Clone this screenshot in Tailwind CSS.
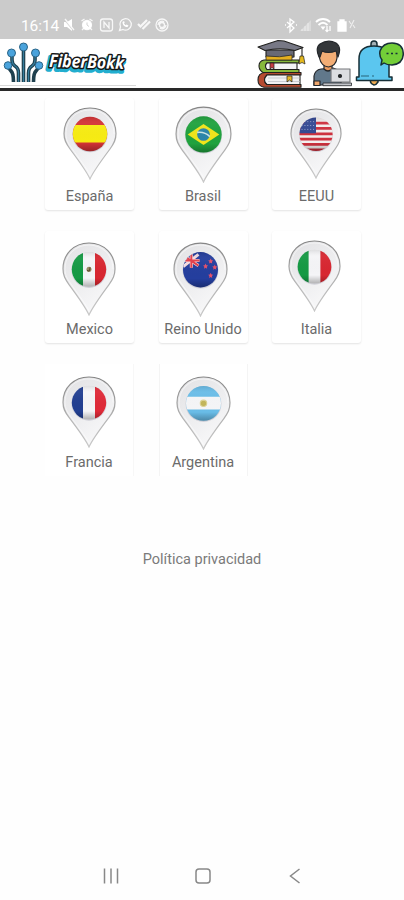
<!DOCTYPE html>
<html lang="es">
<head>
<meta charset="utf-8">
<title>FiberBokk</title>
<script src="https://cdn.jsdelivr.net/npm/@tailwindcss/browser@4"></script>
</head>
<body class="w-[404px] h-[900px] overflow-hidden bg-[#fefefe] font-[Roboto,sans-serif] text-[#6b6b6b] flex flex-col">
<svg class="absolute w-0 h-0">
  <defs>
    <linearGradient id="shell" x1="0" y1="0" x2=".6" y2="1"><stop offset="0" stop-color="#e2e2e4"/><stop offset=".45" stop-color="#ebebed"/><stop offset="1" stop-color="#f8f8f9"/></linearGradient>
    <linearGradient id="rim" x1="0" y1="0" x2="0" y2="1"><stop offset="0" stop-color="#858585"/><stop offset=".6" stop-color="#b4b4b4"/><stop offset="1" stop-color="#c8c8c8"/></linearGradient>
    <linearGradient id="shade" x1="0" y1="0" x2="0" y2="1"><stop offset="0" stop-color="#000" stop-opacity=".1"/><stop offset=".2" stop-color="#fff" stop-opacity=".04"/><stop offset=".75" stop-color="#000" stop-opacity="0"/><stop offset="1" stop-color="#000" stop-opacity=".28"/></linearGradient>
    <clipPath id="disc"><circle cx="27" cy="27" r="17.2"/></clipPath>
    <symbol id="pin" viewBox="0 0 54 73" preserveAspectRatio="none">
      <path d="M27 72 C23.500 64 16 54 7 42 C3 36.500 1 33 1 26.500 C1 12 12 1 27 1 C42 1 53 12 53 26.500 C53 33 51 36.500 47 42 C38 54 30.500 64 27 72Z" fill="url(#shell)" stroke="url(#rim)" stroke-width="1.200"/>
      <path d="M27 68 C23 60 17 53 9 41.500 C5 36 3 33 3 27 C3 13 13 3 27 3 C41 3 51 13 51 27" fill="none" stroke="#fff" stroke-opacity=".5"/>
      <circle cx="27" cy="27.700" r="17.600" fill="#d0d0d8"/>
    </symbol>
    <symbol id="gloss" viewBox="0 0 54 73" preserveAspectRatio="none"><circle cx="27" cy="27" r="17.200" fill="url(#shade)"/></symbol>
  </defs>
</svg>

<div class="h-[39px] shrink-0 bg-[#cbcbcb] text-white flex items-end justify-between pl-[21px] pr-[46px] pb-[4px]">
  <div class="flex items-center h-[20px]">
    <span class="text-[15.5px] leading-[20px] w-[41px] tracking-[-0.1px] pt-px">16:14</span>
    <svg width="110" height="18" viewBox="0 0 110 18" fill="none" stroke="#fff" stroke-opacity=".85" stroke-width="1.300">
      <path d="M2 6h3l5-3v12l-5-4H2z" fill="#fff" stroke="none"/><path d="M2 3l10 12" stroke="#cbcbcb"/><path d="M3 3l9 11"/>
      <circle cx="25" cy="9" r="4.500" fill="#fff"/><path d="M19.500 5l3-2M30.500 5l-3-2M20 14l2-2M30 14l-2-2"/><path d="M25 6.500V9l2 1.500" stroke="#cbcbcb" stroke-width="1"/>
      <rect x="38.500" y="3" width="12" height="12" rx="2.500"/><path d="M42 12V6l5 6V6"/>
      <path d="M57.500 14.500l1-3.500a5.700 5.700 0 1 1 2.500 2.500z"/><path d="M60.500 6c0 3 2 5 5 5l1-1.500-2-1-1 .7-1.500-1.700.7-1-.7-1.500z" fill="#fff" stroke="none"/>
      <path d="M76 8l2.500 2.500L85 4M80.500 13L88 5.500" stroke-width="2.200"/>
      <circle cx="100" cy="9" r="6"/><circle cx="100" cy="9" r="2.500"/><path d="M96 9c0-3 4-5 6-3M104 9c0 3-4 5-6 3"/>
    </svg>
  </div>
  <svg width="74" height="20" viewBox="0 0 74 20" fill="none" stroke="#fff" stroke-width="1.300">
    <path d="M3 7l7 6-4 4V4l4 3-7 6M1 10h1M12 10h1"/>
    <path d="M16 16L27 5v11z" fill="#fff" fill-opacity=".3" stroke="none"/><path d="M18 16v-2M21 16v-5M24 16V8" stroke-opacity=".4"/>
    <path d="M32 7c4-4 10-4 14 0M34.500 10c3-3 6-3 9 0" stroke-width="1.800"/><path d="M36.500 11.500h5L39 15z" fill="#fff" stroke="none"/><path d="M43 11v5M46 16v-5M41.500 15l1.500 1.500 1.500-1.500"/>
    <path d="M54 7h2V5h4v2h2v9h-8z" fill="#fff"/><path d="M65 6l2 3M70 5l-4 8M69 10l2 3" stroke-width="1.100" stroke-opacity=".7"/>
  </svg>
</div>

<header class="h-[52px] shrink-0 bg-white border-b-[3px] border-[#292929]">
  <svg width="404" height="49" viewBox="0 39 404 49">
    <path d="M0 85.500H136" stroke="#d8d8d8"/>
    <g fill="none" stroke="#1f404e" stroke-width="3.600">
      <path d="M23.500 50V82M12 55V60Q12 64 15 66Q18.500 68 18.500 73V82M35 55V60Q35 64 32 66Q28.500 68 28.500 73V82M8 67L11 71Q13.500 73 13.500 82M39 67L36 71Q33.500 73 33.500 82"/>
    </g>
    <g fill="none" stroke="#367c9b" stroke-width="1.200"><path d="M23.500 50V82M12 55V60Q12 64 15 66Q18.500 68 18.500 73V82M35 55V60Q35 64 32 66Q28.500 68 28.500 73V82"/></g>
    <g fill="#4aa3dc" stroke="#2b6587" stroke-width="1"><circle cx="23.500" cy="47" r="4"/><circle cx="11.500" cy="53" r="4"/><circle cx="35.500" cy="53" r="4"/><circle cx="8" cy="65.500" r="3.800"/><circle cx="39" cy="65.500" r="3.800"/></g>
    <g font-family="'Open Sans', sans-serif" font-weight="700" font-style="italic" font-size="17.500" paint-order="stroke" stroke-linejoin="round" transform="rotate(1.500 48 68)">
      <text x="47" y="69.500" textLength="76" lengthAdjust="spacingAndGlyphs" fill="#22aecf" stroke="#22aecf" stroke-width="4.500">FiberBokk</text>
      <text x="49" y="67" textLength="75" lengthAdjust="spacingAndGlyphs" fill="#fff" stroke="#161616" stroke-width="3">FiberBokk</text>
    </g>
    <!-- books -->
    <g stroke="#20201e" stroke-width="1.100" stroke-linejoin="round">
      <path d="M265 72.500H301V75H267Q262 80 267 84.500H301V87.300H264Q258 86 258 80Q258 73 265 72.500Z" fill="#b54a30"/>
      <path d="M267 75H300V84.500H267Q262 80 267 75Z" fill="#f1f1f3"/>
      <path d="M268 78H300M268 81.500H300" stroke="#b8bbc2" stroke-width=".7"/>
      <path d="M287 76H292V82L289.500 80L287 82Z" fill="#e6b72a" stroke-width=".7"/>
      <path d="M264 60H299V63H267Q264 66 267 69.500H299V72.500H263Q259 70 259 66Q259 61 264 60Z" fill="#86b83b"/>
      <path d="M267 63H297V69.500H267Q264 66 267 63Z" fill="#f3f3f5"/>
      <path d="M270 63H274V69L272 67.500L270 69Z" fill="#c73b43" stroke-width=".7"/>
      <path d="M266 50H294V57Q280 59 266 57Z" fill="#686975"/>
      <path d="M266 56Q280 58 292 55V60H266Z" fill="#e5af1f" stroke-width=".7"/>
      <path d="M258 47L278 40.500L284 41L303 47.500L295 50.500Q280 47 265 50.500Z" fill="#777885"/>
      <path d="M302 48V57" fill="none"/><path d="M300 56H303.500L305 64Q302 61 299 64Z" fill="#e5b91d" stroke-width=".7"/>
    </g>
    <!-- person with laptop -->
    <g stroke="#24272b" stroke-width="1.200" stroke-linejoin="round">
      <path d="M314 85V76Q315 70 321 69L333 68Q340 70 341 76V85Z" fill="#61788b"/>
      <path d="M314 81H320V85.500H314Z" fill="#eea66d"/>
      <path d="M324 64H332V69Q328 73 324 69Z" fill="#e99b61"/>
      <path d="M319.500 51Q328 47 337 51V58Q336 66 328.500 67Q321 66 319.500 58Z" fill="#f2ad75"/>
      <path d="M319 57Q315 48 320 44Q328 39 336 43Q342 47 338 57L336 51Q328 54 322 51L320 57Z" fill="#34373a"/>
      <path d="M331 69H350V82H331Z" fill="#dcdde1" stroke="#77797d"/><path d="M323 83H351.500V85.700H323Z" fill="#c4c5ca" stroke-width=".8"/>
      <circle cx="340" cy="76" r="1.500" fill="#292929"/>
    </g>
    <!-- notification bell -->
    <g stroke="#172f37" stroke-width="1.500" stroke-linejoin="round">
      <path d="M371 47V44Q371 41 374 41Q377 41 377 44V47" fill="#a5b1b6"/>
      <path d="M370.500 79H378V82Q376 85 374 85Q371 84 370.500 82Z" fill="#efaa51"/>
      <path d="M359 77V59Q359 46 374 46Q389 46 389 59V77H392V80.500H356.500V77Z" fill="#5bc6ef"/>
      <path d="M361 76H369M372 76H374" stroke="#28647a" stroke-width="1.100"/>
      <path d="M384 63L381 65L382 60Q379 56 380 51Q383 43 392 43Q403 43 403.300 54Q403 64 392 65Q387 65 384 63Z" fill="#73ce38"/>
      <path d="M386.500 53.500H388.500M391 53.500H393M395.500 53.500H397.500" stroke-width="1.700"/>
    </g>
  </svg>
</header>

<main class="ml-[45px] mt-[7px] grid grid-cols-[repeat(3,89px)] gap-x-[24.5px] gap-y-[21px] text-[14.5px] leading-[18px]">
  <div class="h-[112px] rounded-[3px] bg-white shadow-[0_1px_2px_#0000001c] flex flex-col justify-between pb-[4px]">
    <svg class="ml-[17.500px] mt-[9px]" width="54" height="73" viewBox="0 0 54 73"><use href="#pin" width="54" height="73"/><g clip-path="url(#disc)"><rect width="54" height="54" fill="#d43336"/><path d="M8 18H46V35.500H8Z" fill="#f7ec13"/></g><use href="#gloss" width="54" height="73"/></svg>
    <div class="text-center">España</div>
  </div>
  <div class="h-[112px] rounded-[3px] bg-white shadow-[0_1px_2px_#0000001c] flex flex-col justify-between pb-[4px]">
    <svg class="ml-[16px] mt-[8px]" width="57" height="77" viewBox="0 0 54 73" preserveAspectRatio="none"><use href="#pin" width="54" height="73"/><g clip-path="url(#disc)"><rect width="54" height="54" fill="#20a23e"/><path d="M12 27L27 17L42 27L27 37Z" fill="#f0e51b"/><circle cx="27" cy="27" r="6" fill="#2a85aa"/><path d="M21 25Q28 24 33 29" fill="none" stroke="#c9e4e4" stroke-width="1.500"/></g><use href="#gloss" width="54" height="73"/></svg>
    <div class="text-center">Brasil</div>
  </div>
  <div class="h-[112px] rounded-[3px] bg-white shadow-[0_1px_2px_#0000001c] flex flex-col justify-between pb-[4px]">
    <svg class="ml-[17.500px] mt-[10px]" width="52" height="71" viewBox="0 0 54 73" preserveAspectRatio="none"><use href="#pin" width="54" height="73"/><g clip-path="url(#disc)"><rect width="54" height="54" fill="#f3eeee"/><path d="M8 15.500H46M8 21H46M8 26.500H46M8 32H46M8 37.500H46M8 43H46" stroke="#cf303e" stroke-width="2.800"/><path d="M8 8H27V26H8Z" fill="#344893"/><path d="M12 14H27M12 18H27M12 22H27" stroke="#a2a9cf" stroke-width="1" stroke-dasharray="1 2"/></g><use href="#gloss" width="54" height="73"/></svg>
    <div class="text-center">EEUU</div>
  </div>

  <div class="h-[112px] rounded-[3px] bg-white shadow-[0_1px_2px_#0000001c] flex flex-col justify-between pb-[4px]">
    <svg class="ml-[16.500px] mt-[11px]" width="54" height="74" viewBox="0 0 54 73" preserveAspectRatio="none"><use href="#pin" width="54" height="73"/><g clip-path="url(#disc)"><rect width="54" height="54" fill="#f5f5f7"/><path d="M8 8H21V46H8Z" fill="#159a44"/><path d="M33 8H46V46H33Z" fill="#d82731"/><circle cx="27" cy="27" r="2.500" fill="#9a8b62"/><path d="M25 28Q28 30 28 25" fill="none" stroke="#594329"/></g><use href="#gloss" width="54" height="73"/></svg>
    <div class="text-center">Mexico</div>
  </div>
  <div class="h-[112px] rounded-[3px] bg-white shadow-[0_1px_2px_#0000001c] flex flex-col justify-between pb-[4px]">
    <svg class="ml-[14px] mt-[11px]" width="55" height="75" viewBox="0 0 54 73" preserveAspectRatio="none"><use href="#pin" width="54" height="73"/><g clip-path="url(#disc)"><rect width="54" height="54" fill="#243e9e"/><path d="M10 13L25 23M25 12L10 24M18 9V25M9 18H26" stroke="#f4dce1" stroke-width="3"/><path d="M10 13L25 23M18 9V25M9 18H26" stroke="#e23d48" stroke-width="1.900"/><g fill="#e6506a"><path id="star" d="M37 16l.8 1.700 1.700.2-1.300 1.300.3 1.800-1.500-.9-1.600.9.400-1.800-1.300-1.300 1.700-.2z"/><use href="#star" x="-5" y="5"/><use href="#star" x="4" y="6"/><use href="#star" y="14"/></g></g><use href="#gloss" width="54" height="73"/></svg>
    <div class="text-center whitespace-nowrap">Reino Unido</div>
  </div>
  <div class="h-[112px] rounded-[3px] bg-white shadow-[0_1px_2px_#0000001c] flex flex-col justify-between pb-[4px]">
    <svg class="ml-[15.500px] mt-[9px]" width="53" height="72" viewBox="0 0 54 73" preserveAspectRatio="none"><use href="#pin" width="54" height="73"/><g clip-path="url(#disc)"><rect width="54" height="54" fill="#f5f5f7"/><path d="M8 8H21V46H8Z" fill="#159a44"/><path d="M33 8H46V46H33Z" fill="#d82731"/></g><use href="#gloss" width="54" height="73"/></svg>
    <div class="text-center">Italia</div>
  </div>

  <div class="h-[112px] bg-white border-r border-[#f7f7f7] flex flex-col justify-between pb-[4px]">
    <svg class="ml-[16.500px] mt-[12px]" width="54" height="72" viewBox="0 0 54 73" preserveAspectRatio="none"><use href="#pin" width="54" height="73"/><g clip-path="url(#disc)"><rect width="54" height="54" fill="#f5f5f7"/><path d="M8 8H21V46H8Z" fill="#223f91"/><path d="M33 8H46V46H33Z" fill="#df2a38"/></g><use href="#gloss" width="54" height="73"/></svg>
    <div class="text-center">Francia</div>
  </div>
  <div class="h-[112px] bg-white border-x border-[#f4f4f4] flex flex-col justify-between pb-[4px]">
    <svg class="ml-[16px] mt-[12px]" width="55" height="74" viewBox="0 0 54 73" preserveAspectRatio="none"><use href="#pin" width="54" height="73"/><g clip-path="url(#disc)"><rect width="54" height="54" fill="#69bce7"/><path d="M8 20.500H46V33H8Z" fill="#f6f6f8"/><circle cx="27" cy="27" r="3.200" fill="#c3b65b" stroke="#ddd495"/></g><use href="#gloss" width="54" height="73"/></svg>
    <div class="text-center">Argentina</div>
  </div>
</main>

<p class="mt-[75px] text-center text-[14.5px] leading-[18px] text-[#7a7a7a]">Política privacidad</p>

<nav class="mt-auto h-[48px] shrink-0 grid grid-cols-3 pl-[65px] pr-[63px] items-center text-[#888]">
  <svg class="justify-self-center" width="18" height="18" viewBox="0 0 18 18" fill="none" stroke="currentColor" stroke-width="1.500"><path d="M2.500 1.500V16.500M9 1.500V16.500M15.500 1.500V16.500"/></svg>
  <svg class="justify-self-center" width="18" height="18" viewBox="0 0 18 18" fill="none" stroke="currentColor" stroke-width="1.500"><rect x="2" y="2" width="14" height="14" rx="3"/></svg>
  <svg class="justify-self-center" width="18" height="18" viewBox="0 0 18 18" fill="none" stroke="currentColor" stroke-width="1.500"><path d="M13.500 2L4.500 9L13.500 16"/></svg>
</nav>
</body>
</html>
